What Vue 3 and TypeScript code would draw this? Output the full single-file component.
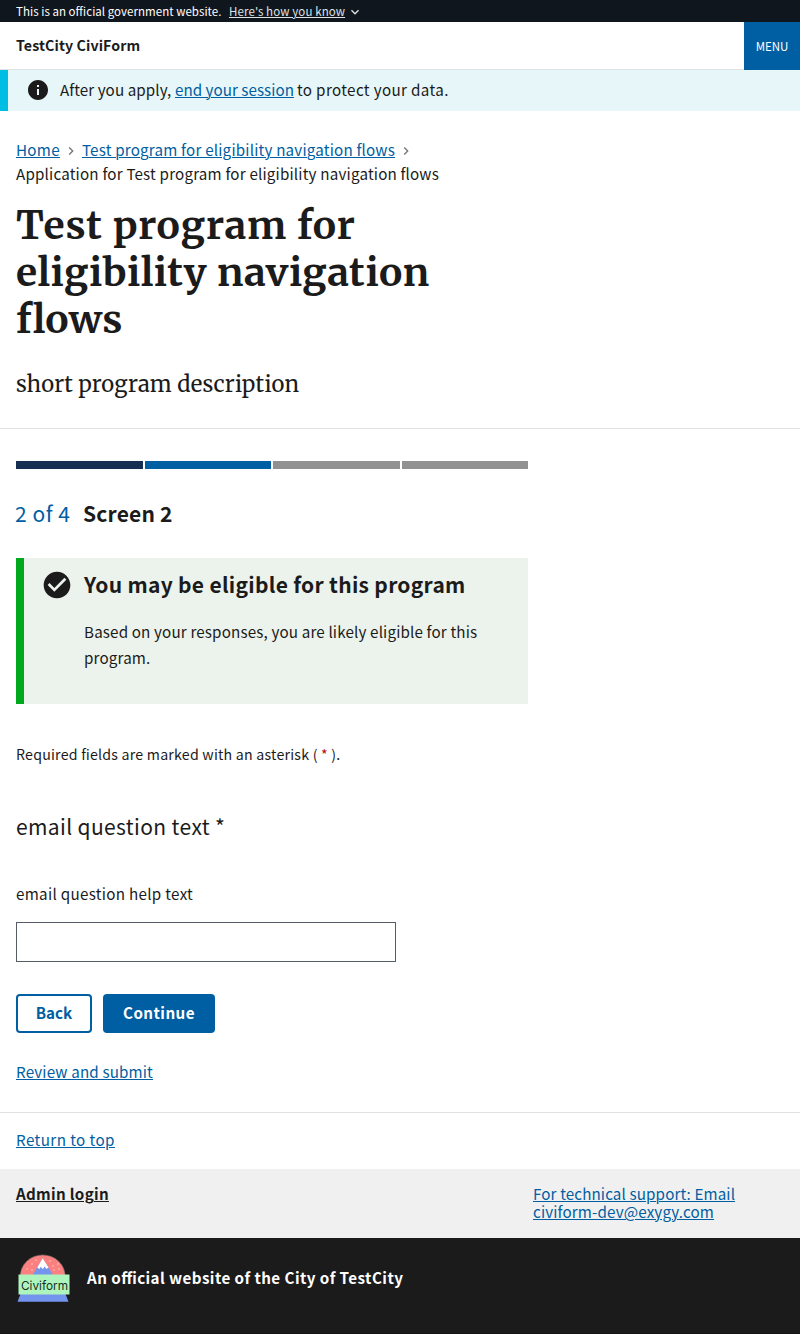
<script setup lang="ts">
const steps = ['done', 'current', 'todo', 'todo']
const flakes = [
  [27, 1269], [32, 1264], [36, 1260], [50, 1261], [53, 1266], [58, 1264], [54, 1270], [59, 1269], [32, 1270],
].map(([x, y]) => [x - 17, y - 1254])
</script>

<template>
  <div class="page">
    <div class="banner">
      <span class="b1">This is an official government website.</span>
      <a class="b2">Here's how you know</a>
      <svg width="16" height="16" viewBox="0 0 24 24"><path d="M16.59 8.59 12 13.17 7.41 8.59 6 10l6 6 6-6z" /></svg>
    </div>

    <header class="header">
      <strong>TestCity CiviForm</strong>
      <button class="menu">MENU</button>
    </header>

    <div class="notice">
      <svg width="24" height="24" viewBox="0 0 24 24"><path d="M12 2C6.48 2 2 6.48 2 12s4.48 10 10 10 10-4.48 10-10S17.52 2 12 2zm1 15h-2v-6h2v6zm0-8h-2V7h2v2z" /></svg>
      <p><span class="n1">After you apply,</span><a class="n2">end your session</a><span class="n3">to protect your data.</span></p>
    </div>

    <nav class="crumbs">
      <div class="crumb-row">
        <a class="c1">Home</a>
        <svg width="16" height="16" viewBox="0 0 24 24"><path d="M10 6 8.59 7.41 13.17 12l-4.58 4.59L10 18l6-6z" /></svg>
        <a class="c2">Test program for eligibility navigation flows</a>
        <svg width="16" height="16" viewBox="0 0 24 24"><path d="M10 6 8.59 7.41 13.17 12l-4.58 4.59L10 18l6-6z" /></svg>
      </div>
      <div class="c3">Application for Test program for eligibility navigation flows</div>
    </nav>

    <h1><span class="t1">Test program for</span><br />eligibility navigation<br /><span class="t3">flows</span></h1>
    <p class="desc">short program description</p>

    <main class="main">
      <div class="progress"><i v-for="(s, n) in steps" :key="n" :class="s" /></div>
      <h2 class="step"><span class="count">2 of 4</span><span class="name">Screen 2</span></h2>

      <section class="eligible">
        <svg width="32" height="32" viewBox="0 0 24 24"><path d="M12 2C6.48 2 2 6.48 2 12s4.48 10 10 10 10-4.48 10-10S17.52 2 12 2zm-2 15-5-5 1.41-1.41L10 14.17l7.59-7.59L19 8l-9 9z" /></svg>
        <div>
          <h3>You may be eligible for this program</h3>
          <p>Based on your responses, you are likely eligible for this<br />program.</p>
        </div>
      </section>

      <p class="required">Required fields are marked with an asterisk ( <b>*</b> ).</p>
      <label class="question" for="email">email question text *</label>
      <p class="help">email question help text</p>
      <input id="email" type="email" />

      <div class="actions">
        <button class="back">Back</button>
        <button class="next">Continue</button>
      </div>
      <a class="review">Review and submit</a>
    </main>

    <div class="return"><a>Return to top</a></div>

    <div class="support">
      <a class="admin">Admin login</a>
      <a class="contact"><span class="s1">For technical support: Email</span><br /><span class="s2">civiform-dev@exygy.com</span></a>
    </div>

    <footer class="footer">
      <svg class="logo" width="54" height="50" viewBox="0 0 54 50">
        <path d="M3.2 22.500a22.500 21.600 0 0 1 45 0z" fill="#fb8080" stroke="#74666a" stroke-width=".6" />
        <circle v-for="(f, n) in flakes" :key="n" :cx="f[0]" :cy="f[1]" r=".7" fill="#ffd5d3" />
        <path d="M25.700 4.200 36 21H15.600z" fill="#7495ee" />
        <path d="M25.700 4.200 31.500 13.500l-2 1.600-2-2.600-1.700 2.800-2-2.600-1.500 2.400-2-1.600z" fill="#fff" />
        <path d="M3.500 40h45l3 7.700h-51z" fill="#7495ee" />
        <path d="M1.500 20.500h51v20h-51z" fill="#aef5bd" />
        <text x="4" y="35.800" textLength="47" lengthAdjust="spacingAndGlyphs">Civiform</text>
      </svg>
      <strong>An official website of the City of TestCity</strong>
    </footer>
  </div>
</template>

<style>
body {
  background: #fff;
}
</style>

<style scoped>
.page {
  width: 800px;
  height: 1334px;
  overflow: hidden;
  background: #fff;
  color: #1b1b1b;
  font-family: 'Noto Sans CJK JP', 'Noto Sans', sans-serif;
  font-size: 15.2px;
  line-height: 24px;
  font-feature-settings: 'liga' 1;
  white-space: nowrap;
}
h1, h2, h3, p {
  margin: 0;
}
svg {
  display: block;
  flex: none;
  fill: currentColor;
}
a {
  color: #005ea2;
  text-decoration: underline;
  text-decoration-thickness: 1px;
  text-underline-offset: 1px;
}
button {
  font: inherit;
  border: 0;
  padding: 0;
}
.banner {
  height: 22px;
  padding-left: 16px;
  display: flex;
  align-items: center;
  background: #10161d;
  color: #fff;
  font-size: 11.5px;
  line-height: 22px;
}
.b1 {
  width: 213px;
  letter-spacing: 0.04px;
}
.b2 {
  width: 118px;
  color: #dfe1e2;
  letter-spacing: 0.11px;
}
.banner svg {
  margin-top: 1px;
  fill: #dfe1e2;
}
.header {
  box-sizing: border-box;
  height: 48px;
  padding-left: 16px;
  display: flex;
  justify-content: space-between;
  background: linear-gradient(#dfe1e2, #dfe1e2) bottom / 100% 1px no-repeat;
}
.header strong {
  font-size: 14.2px;
  line-height: 47px;
  letter-spacing: 0.11px;
}
.menu {
  width: 56px;
  background: #005ea2;
  color: #fff;
  font-size: 11.5px;
  line-height: 48px;
}
.notice {
  box-sizing: border-box;
  height: 41px;
  display: flex;
  align-items: flex-start;
  padding: 8px 0 0 18px;
  border-left: 8px solid #00bde3;
  background: #e7f6f8;
}
.notice p {
  margin: -1px 0 0 10px;
  display: flex;
}
.n1 {
  width: 115px;
  letter-spacing: 0.08px;
}
.n2 {
  letter-spacing: 0.03px;
}
.n3 {
  margin-left: 3px;
  letter-spacing: 0.36px;
}
.crumbs {
  padding: 26px 0 0 16px;
}
.crumb-row {
  display: flex;
  height: 24px;
}
.crumb-row svg {
  margin: 6px 3px 0 3px;
  fill: #71767a;
}
.c1 {
  letter-spacing: 0.3px;
}
.c2 {
  letter-spacing: 0.19px;
}
.c3 {
  letter-spacing: 0.18px;
}
h1 {
  margin: 17px 0 0 16px;
  font: 700 39px/47px Merriweather, 'Noto Serif', serif;
  letter-spacing: 0.5px;
}
.t1 {
  letter-spacing: 0.77px;
}
.t3 {
  letter-spacing: 0.05px;
}
.desc {
  box-sizing: border-box;
  height: 86px;
  padding-left: 16px;
  border-bottom: 1px solid #dfe1e2;
  font: 22px/82px Merriweather, 'Noto Serif', serif;
  letter-spacing: 0.15px;
}
.main {
  box-sizing: border-box;
  height: 684px;
  padding: 32px 272px 0 16px;
  border-bottom: 1px solid #dfe1e2;
}
.progress {
  display: grid;
  grid-template-columns: repeat(4, 1fr);
  gap: 2px;
  height: 8px;
}
.done {
  background: #162e51;
}
.current {
  background: #005ea2;
}
.todo {
  background: #919191;
}
.step {
  margin-top: 29px;
  display: flex;
  font-size: 21px;
  line-height: 30px;
}
.count {
  width: 68px;
  margin-left: -1px;
  color: #005ea2;
  font-weight: 400;
  letter-spacing: 0.55px;
}
.name {
  letter-spacing: 0.2px;
}
.eligible {
  box-sizing: border-box;
  height: 146px;
  margin-top: 30px;
  padding: 11px 0 0 17px;
  border-left: 8px solid #00a91c;
  background: #ecf3ec;
  display: flex;
  gap: 11px;
}
h3 {
  font-size: 21px;
  line-height: 30px;
  letter-spacing: 0.29px;
}
.eligible p {
  margin-top: 19px;
  line-height: 26px;
  letter-spacing: 0.15px;
}
.required {
  margin-top: 38px;
  font-size: 14.2px;
  letter-spacing: 0.22px;
}
.required b {
  font-weight: 400;
  color: #b50909;
}
.question {
  display: block;
  margin-top: 45px;
  font-size: 21px;
  line-height: 30px;
  letter-spacing: 0.37px;
}
.help {
  margin-top: 40px;
  letter-spacing: 0.3px;
}
input {
  box-sizing: border-box;
  display: block;
  width: 380px;
  height: 40px;
  margin: 17px 0 0;
  border: 1px solid #565c65;
  border-radius: 0;
  background: #fff;
}
.actions {
  display: flex;
  gap: 11px;
  margin-top: 32px;
}
.actions button {
  height: 39px;
  padding-bottom: 3px;
  border-radius: 4px;
  font-weight: 700;
}
.back {
  width: 76px;
  color: #005ea2;
  background: #fff;
  box-shadow: inset 0 0 0 2px #005ea2;
  letter-spacing: 0.05px;
}
.next {
  width: 112px;
  color: #fff;
  background: #005ea2;
  letter-spacing: 0.45px;
}
.review {
  display: block;
  margin-top: 26px;
  letter-spacing: 0.15px;
}
.return {
  height: 56px;
  padding-left: 16px;
  line-height: 52px;
  letter-spacing: 0.42px;
}
.support {
  box-sizing: border-box;
  height: 69px;
  padding: 15px 0 0 16px;
  display: flex;
  background: #f0f0f0;
  line-height: 18px;
}
.admin {
  width: 517px;
  color: #1b1b1b;
  font-weight: 700;
  letter-spacing: 0.3px;
}
.s1 {
  letter-spacing: 0.12px;
}
.s2 {
  letter-spacing: 0.14px;
}
.footer {
  height: 96px;
  padding: 16px 0 0 17px;
  box-sizing: border-box;
  display: flex;
  gap: 16px;
  background: #1b1b1b;
  border-bottom: 1px solid #171217;
  color: #fff;
}
.footer strong {
  margin-top: 11px;
  letter-spacing: 0.43px;
}
.logo text {
  font: 12px Inter, sans-serif;
  fill: #173022;
}
</style>
